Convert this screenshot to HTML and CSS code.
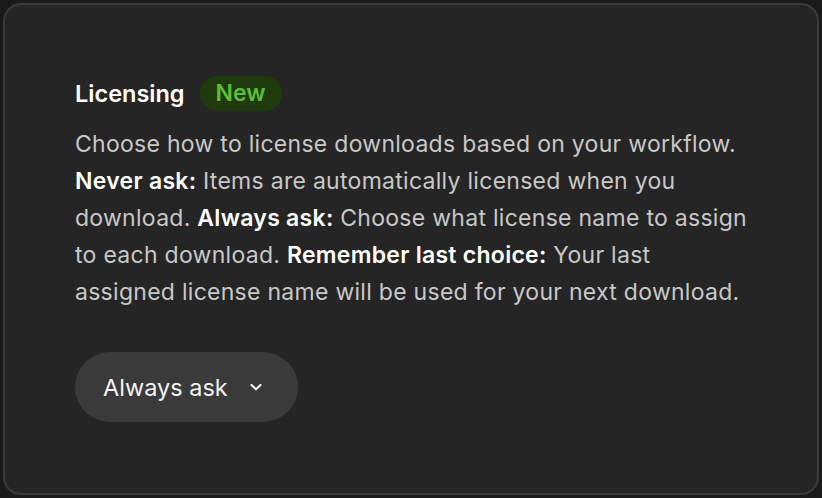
FILE: index.html
```html
<!DOCTYPE html>
<html>
<head>
<meta charset="utf-8">
<link rel="stylesheet" href="styles.css">
</head>
<body>
<div class="card">
  <div class="title-row">
    <span class="title">Licensing</span>
    <span class="badge">New</span>
  </div>
  <p class="desc">Choose how to license downloads based on your workflow.<br><b>Never ask:</b> Items are automatically licensed when you<br>download. <b>Always ask:</b> Choose what license name to assign<br>to each download. <b>Remember last choice:</b> Your last<br>assigned license name will be used for your next download.</p>
  <button class="select">
    <span>Always ask</span>
    <svg width="16" height="16" viewBox="0 0 16 16"><path d="M3.5 6 L8 10.3 L12.5 6" fill="none" stroke="#f2f2f2" stroke-width="2.2" stroke-linecap="round" stroke-linejoin="round"/></svg>
  </button>
</div>
</body>
</html>
```
FILE: styles.css
```css
html, body {
  margin: 0;
  padding: 0;
  background: #1a1a1a;
}
body {
  padding: 3px;
  width: 822px;
  height: 498px;
  box-sizing: border-box;
  font-family: Inter, "Noto Sans", sans-serif;
}
.card {
  box-sizing: border-box;
  width: 816px;
  height: 492px;
  background: #252525;
  border: 2px solid #3a3a3a;
  border-radius: 18px;
  padding: 70px 60px 0 70px;
  display: flex;
  flex-direction: column;
  align-items: flex-start;
}
.title-row {
  display: flex;
  align-items: center;
  gap: 15px;
  height: 36px;
}
.title {
  color: #ffffff;
  font-size: 23.5px;
  font-weight: 600;
}
.badge {
  background: #1f3b0d;
  color: #5cbf35;
  font-size: 23px;
  font-weight: 600;
  border-radius: 18px;
  padding: 3px 16px;
  line-height: 29px;
}
.desc {
  margin: 15px 0 0 0;
  color: #c8c8c8;
  font-size: 23px;
  line-height: 37px;
  letter-spacing: 0.28px;
  white-space: nowrap;
}
.desc b {
  color: #ffffff;
  font-weight: 600;
}
.select {
  margin-top: 41px;
  height: 70px;
  padding: 0 34px 0 28px;
  background: #3a3a3a;
  border: none;
  border-radius: 35px;
  display: flex;
  align-items: center;
  gap: 20px;
  color: #f2f2f2;
  font-family: Inter, "Noto Sans", sans-serif;
  font-size: 23.5px;
}
```
